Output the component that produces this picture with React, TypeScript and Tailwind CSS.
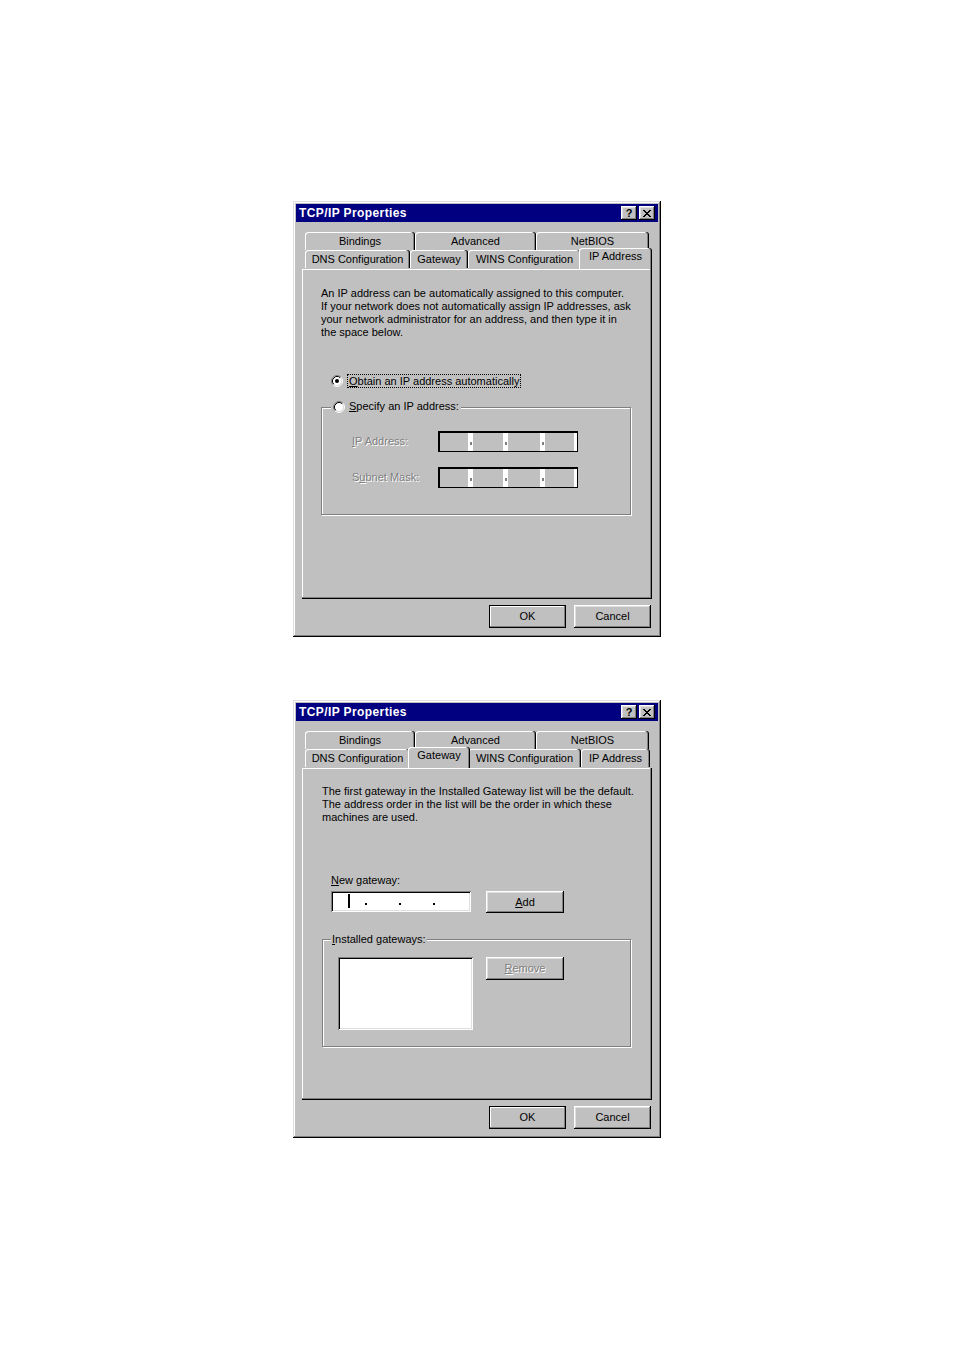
import React from 'react';
import clsx from 'clsx';

const raised =
  'shadow-[inset_-1px_-1px_#000,inset_1px_1px_#fff,inset_-2px_-2px_#808080,inset_2px_2px_#dfdfdf]';
const sunken =
  'shadow-[inset_1px_1px_#808080,inset_-1px_-1px_#fff,inset_2px_2px_#000,inset_-2px_-2px_#dfdfdf]';
const etched = 'border border-[#808080] shadow-[inset_1px_1px_#fff,1px_1px_#fff]';
const dim = 'text-[#808080] [text-shadow:1px_1px_0_#fff]';

function CloseGlyph() {
  // 8x7 pixel cross, like the win95 bitmap
  const px: [number, number][] = [
    [0, 0], [1, 0], [6, 0], [7, 0],
    [1, 1], [2, 1], [5, 1], [6, 1],
    [2, 2], [3, 2], [4, 2], [5, 2],
    [3, 3], [4, 3],
    [2, 4], [3, 4], [4, 4], [5, 4],
    [1, 5], [2, 5], [5, 5], [6, 5],
    [0, 6], [1, 6], [6, 6], [7, 6],
  ];
  return (
    <svg width="8" height="7" viewBox="0 0 8 7" shapeRendering="crispEdges">
      {px.map(([x, y]) => (
        <rect key={`${x}-${y}`} x={x} y={y} width="1" height="1" fill="#000" />
      ))}
    </svg>
  );
}

function Radio({ checked }: { checked?: boolean }) {
  return (
    <svg width="12" height="12" viewBox="0 0 12 12" className="shrink-0">
      <circle cx="6" cy="6" r="4.5" fill="#fff" />
      <path d="M2.11 9.89A5.5 5.5 0 0 1 9.89 2.11" stroke="#808080" fill="none" />
      <path d="M9.89 2.11A5.5 5.5 0 0 1 2.11 9.89" stroke="#fff" fill="none" />
      <path d="M2.82 9.18A4.5 4.5 0 0 1 9.18 2.82" stroke="#000" fill="none" />
      <path d="M9.18 2.82A4.5 4.5 0 0 1 2.82 9.18" stroke="#dfdfdf" fill="none" />
      {checked && <circle cx="6" cy="6" r="2" fill="#000" />}
    </svg>
  );
}

function Tab({ label, className, selected }: { label: string; className: string; selected?: boolean }) {
  return (
    <div
      className={clsx(
        'flex justify-center rounded-t-[3px] bg-[#c0c0c0] shadow-[inset_-1px_0_#000,inset_-2px_0_#808080,inset_1px_1px_#fff]',
        selected ? 'relative z-10 -mx-[2px] -mt-[2px] h-[21px] items-start pt-[2px]' : 'h-[18px] items-center',
        className,
      )}
    >
      {label}
    </div>
  );
}

function Tabs({ active }: { active: 'ip' | 'gateway' }) {
  return (
    <div className="mt-[10px] pl-[3px]">
      <div className="flex">
        <Tab label="Bindings" className="w-[110px]" />
        <Tab label="Advanced" className="w-[121px]" />
        <Tab label="NetBIOS" className="w-[113px]" />
      </div>
      <div className="flex">
        <Tab label="DNS Configuration" className="w-[105px]" />
        <Tab
          label="Gateway"
          selected={active === 'gateway'}
          className={active === 'gateway' ? 'w-[62px]' : 'w-[58px]'}
        />
        <Tab label="WINS Configuration" className="w-[113px]" />
        <Tab
          label="IP Address"
          selected={active === 'ip'}
          className={active === 'ip' ? 'w-[73px]' : 'w-[69px]'}
        />
      </div>
    </div>
  );
}

function Button({
  children,
  className,
  isDefault,
  disabled,
}: {
  children: React.ReactNode;
  className: string;
  isDefault?: boolean;
  disabled?: boolean;
}) {
  return (
    <div
      className={clsx(
        'flex items-center justify-center bg-[#c0c0c0]',
        isDefault
          ? 'border border-black shadow-[inset_-1px_-1px_#808080,inset_1px_1px_#fff]'
          : raised,
        disabled && dim,
        className,
      )}
    >
      {children}
    </div>
  );
}

function Window({
  active,
  panelHeight,
  children,
}: {
  active: 'ip' | 'gateway';
  panelHeight: string;
  children: React.ReactNode;
}) {
  return (
    <div className="w-[368px] bg-[#c0c0c0] p-[3px] shadow-[inset_-1px_-1px_#000,inset_1px_1px_#dfdfdf,inset_-2px_-2px_#808080,inset_2px_2px_#fff]">
      <div className="flex h-[18px] items-center justify-between bg-[#000080] pl-[3px] pr-[3px]">
        <span className="text-[12px] font-bold tracking-[0.4px] text-white">TCP/IP Properties</span>
        <div className="flex gap-[2px]">
          <div className={`flex h-[14px] w-[16px] items-center justify-center bg-[#c0c0c0] text-[11px] font-bold leading-none ${raised}`}>
            ?
          </div>
          <div className={`flex h-[14px] w-[16px] items-center justify-center bg-[#c0c0c0] ${raised}`}>
            <CloseGlyph />
          </div>
        </div>
      </div>

      <div className="px-[6px] pb-[6px]">
        <Tabs active={active} />
        <div
          className={clsx(
            'bg-[#c0c0c0] shadow-[inset_-1px_-1px_#000,inset_-2px_-2px_#808080,inset_1px_1px_#fff]',
            panelHeight,
          )}
        >
          {children}
        </div>
        <div className="mt-[6px] flex justify-end gap-[8px] pr-[1px]">
          <Button isDefault className="h-[23px] w-[77px]">OK</Button>
          <Button className="h-[23px] w-[77px]">Cancel</Button>
        </div>
      </div>
    </div>
  );
}

function DisabledIpField() {
  const Dot = () => (
    <div className="flex w-[5px] justify-center bg-white pt-[9px]">
      <div className="h-[3px] w-[2px] bg-[#808080]" />
    </div>
  );
  return (
    <div className="flex h-[21px] w-[140px] border-b border-l-2 border-r border-t-2 border-black">
      <div className="w-[28px]" />
      <Dot />
      <div className="w-[30px]" />
      <Dot />
      <div className="w-[32px]" />
      <Dot />
      <div className="flex-1" />
      <div className="w-[3px] bg-white" />
    </div>
  );
}

function IpPage() {
  return (
    <div className="pl-[19px] pt-[18px]">
      <p>
        An IP address can be automatically assigned to this computer.
        <br />
        If your network does not automatically assign IP addresses, ask
        <br />
        your network administrator for an address, and then type it in
        <br />
        the space below.
      </p>

      <div className="ml-[10px] mt-[35px] flex h-[14px] items-center gap-[4px]">
        <Radio checked />
        <span className="border border-dotted border-black px-[1px] leading-[12px]">
          <span className="underline">O</span>btain an IP address automatically
        </span>
      </div>

      <div className={`relative mt-[19px] w-[310px] ${etched}`}>
        <div className="absolute -top-[8px] left-[9px] flex items-center gap-[4px] bg-[#c0c0c0] px-[2px]">
          <Radio />
          <span>
            <span className="underline">S</span>pecify an IP address:
          </span>
        </div>
        <div className="flex flex-col gap-[15px] pb-[26px] pl-[30px] pt-[23px]">
          <div className="flex items-center">
            <span className={`w-[86px] ${dim}`}>
              <span className="underline">I</span>P Address:
            </span>
            <DisabledIpField />
          </div>
          <div className="flex items-center">
            <span className={`w-[86px] ${dim}`}>
              S<span className="underline">u</span>bnet Mask:
            </span>
            <DisabledIpField />
          </div>
        </div>
      </div>
    </div>
  );
}

function GatewayPage() {
  return (
    <div className="pl-[20px] pt-[17px]">
      <p>
        The first gateway in the Installed Gateway list will be the default.
        <br />
        The address order in the list will be the order in which these
        <br />
        machines are used.
      </p>

      <div className="ml-[9px] mt-[50px]">
        <span className="underline">N</span>ew gateway:
      </div>
      <div className="ml-[9px] mt-[4px] flex items-start">
        <div className={`flex h-[21px] w-[140px] items-start bg-white ${sunken}`}>
          <div className="ml-[17px] mt-[3px] h-[14px] w-[2px] bg-black" />
          <div className="ml-[15px] mt-[12px] h-[2px] w-[2px] bg-black" />
          <div className="ml-[32px] mt-[12px] h-[2px] w-[2px] bg-black" />
          <div className="ml-[32px] mt-[12px] h-[2px] w-[2px] bg-black" />
        </div>
        <Button className="ml-[15px] h-[22px] w-[78px]">
          <span>
            <span className="underline">A</span>dd
          </span>
        </Button>
      </div>

      <div className={`relative mt-[26px] w-[309px] ${etched}`}>
        <div className="absolute -top-[7px] left-[8px] bg-[#c0c0c0] px-[1px]">
          <span className="underline">I</span>nstalled gateways:
        </div>
        <div className="flex items-start pb-[16px] pl-[15px] pt-[17px]">
          <div className={`h-[73px] w-[135px] bg-white ${sunken}`} />
          <Button disabled className="ml-[13px] h-[23px] w-[78px]">
            <span>
              <span className="underline">R</span>emove
            </span>
          </Button>
        </div>
      </div>
    </div>
  );
}

export default function App() {
  return (
    <div className="flex min-h-[1350px] flex-col items-center gap-[63px] bg-white pt-[201px] font-[Liberation_Sans,Arial,sans-serif] text-[11px] leading-[13px] text-black">
      <Window active="ip" panelHeight="h-[330px]">
        <IpPage />
      </Window>
      <Window active="gateway" panelHeight="h-[332px]">
        <GatewayPage />
      </Window>
    </div>
  );
}
